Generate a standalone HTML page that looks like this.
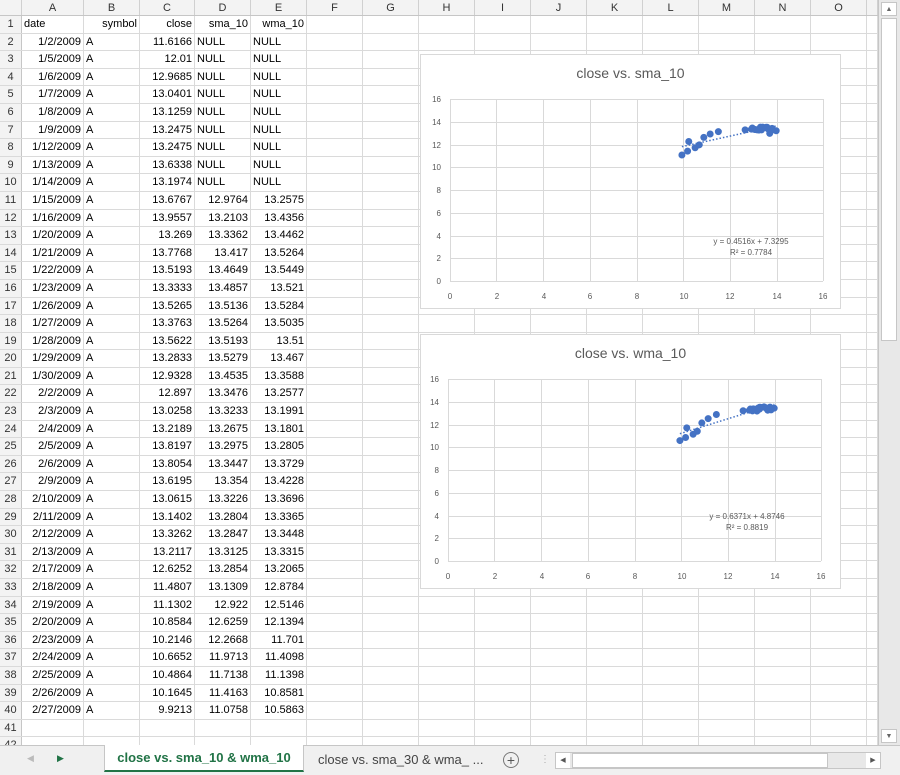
<!DOCTYPE html>
<html><head><meta charset="utf-8"><style>
*{box-sizing:border-box;margin:0;padding:0}
body{width:900px;height:775px;overflow:hidden;background:#fff;font-family:"Liberation Sans",sans-serif;font-size:11px;color:#000;position:relative}
.hdr{position:absolute;left:0;top:0;height:16px;width:878px;background:#f3f3f3;border-bottom:1px solid #c6c6c6;display:flex}
.hdr div{border-right:1px solid #d0d0d0;text-align:center;line-height:16px;color:#333;font-size:11px}
.rows{position:absolute;left:0;top:16px;width:878px}
.r{display:flex;height:17.6px;border-bottom:1px solid #dadada}
.r div{border-right:1px solid #dadada;line-height:17px;padding:0 2px;white-space:nowrap;overflow:hidden}
.r div:first-child{background:#f3f3f3;border-right:1px solid #c6c6c6;text-align:center;color:#333;padding:0}
.w0{width:22px}.wA{width:62px}.wB{width:56px}.wC{width:55px}.wD{width:56px}.wE{width:56px}.wn{width:56px}.wl{width:11px}
.rt{text-align:right}
.chart{position:absolute;background:#fff;border:1px solid #d9d9d9}
.ttl{position:absolute;width:100%;text-align:center;top:10px;font-size:14px;color:#595959}
.vs{position:absolute;left:878px;top:0;width:22px;height:745px;background:#e8e8e8;border-left:1px solid #c6c6c6}
.tabs{position:absolute;left:0;top:745px;width:900px;height:30px;background:#f0f0f0;border-top:1px solid #c6c6c6}
</style></head><body>
<div class="hdr"><div class="w0"></div><div class="wA">A</div><div class="wB">B</div><div class="wC">C</div><div class="wD">D</div><div class="wE">E</div><div class="wn">F</div><div class="wn">G</div><div class="wn">H</div><div class="wn">I</div><div class="wn">J</div><div class="wn">K</div><div class="wn">L</div><div class="wn">M</div><div class="wn">N</div><div class="wn">O</div><div class="wl"></div></div>
<div class="rows" id="rows">
<div class="r"><div class="w0">1</div><div class="wA">date</div><div class="wB rt">symbol</div><div class="wC rt">close</div><div class="wD rt">sma_10</div><div class="wE rt">wma_10</div><div class="wn"></div><div class="wn"></div><div class="wn"></div><div class="wn"></div><div class="wn"></div><div class="wn"></div><div class="wn"></div><div class="wn"></div><div class="wn"></div><div class="wn"></div><div class="wl"></div></div>
<div class="r"><div class="w0">2</div><div class="wA rt">1/2/2009</div><div class="wB">A</div><div class="wC rt">11.6166</div><div class="wD">NULL</div><div class="wE">NULL</div><div class="wn"></div><div class="wn"></div><div class="wn"></div><div class="wn"></div><div class="wn"></div><div class="wn"></div><div class="wn"></div><div class="wn"></div><div class="wn"></div><div class="wn"></div><div class="wl"></div></div>
<div class="r"><div class="w0">3</div><div class="wA rt">1/5/2009</div><div class="wB">A</div><div class="wC rt">12.01</div><div class="wD">NULL</div><div class="wE">NULL</div><div class="wn"></div><div class="wn"></div><div class="wn"></div><div class="wn"></div><div class="wn"></div><div class="wn"></div><div class="wn"></div><div class="wn"></div><div class="wn"></div><div class="wn"></div><div class="wl"></div></div>
<div class="r"><div class="w0">4</div><div class="wA rt">1/6/2009</div><div class="wB">A</div><div class="wC rt">12.9685</div><div class="wD">NULL</div><div class="wE">NULL</div><div class="wn"></div><div class="wn"></div><div class="wn"></div><div class="wn"></div><div class="wn"></div><div class="wn"></div><div class="wn"></div><div class="wn"></div><div class="wn"></div><div class="wn"></div><div class="wl"></div></div>
<div class="r"><div class="w0">5</div><div class="wA rt">1/7/2009</div><div class="wB">A</div><div class="wC rt">13.0401</div><div class="wD">NULL</div><div class="wE">NULL</div><div class="wn"></div><div class="wn"></div><div class="wn"></div><div class="wn"></div><div class="wn"></div><div class="wn"></div><div class="wn"></div><div class="wn"></div><div class="wn"></div><div class="wn"></div><div class="wl"></div></div>
<div class="r"><div class="w0">6</div><div class="wA rt">1/8/2009</div><div class="wB">A</div><div class="wC rt">13.1259</div><div class="wD">NULL</div><div class="wE">NULL</div><div class="wn"></div><div class="wn"></div><div class="wn"></div><div class="wn"></div><div class="wn"></div><div class="wn"></div><div class="wn"></div><div class="wn"></div><div class="wn"></div><div class="wn"></div><div class="wl"></div></div>
<div class="r"><div class="w0">7</div><div class="wA rt">1/9/2009</div><div class="wB">A</div><div class="wC rt">13.2475</div><div class="wD">NULL</div><div class="wE">NULL</div><div class="wn"></div><div class="wn"></div><div class="wn"></div><div class="wn"></div><div class="wn"></div><div class="wn"></div><div class="wn"></div><div class="wn"></div><div class="wn"></div><div class="wn"></div><div class="wl"></div></div>
<div class="r"><div class="w0">8</div><div class="wA rt">1/12/2009</div><div class="wB">A</div><div class="wC rt">13.2475</div><div class="wD">NULL</div><div class="wE">NULL</div><div class="wn"></div><div class="wn"></div><div class="wn"></div><div class="wn"></div><div class="wn"></div><div class="wn"></div><div class="wn"></div><div class="wn"></div><div class="wn"></div><div class="wn"></div><div class="wl"></div></div>
<div class="r"><div class="w0">9</div><div class="wA rt">1/13/2009</div><div class="wB">A</div><div class="wC rt">13.6338</div><div class="wD">NULL</div><div class="wE">NULL</div><div class="wn"></div><div class="wn"></div><div class="wn"></div><div class="wn"></div><div class="wn"></div><div class="wn"></div><div class="wn"></div><div class="wn"></div><div class="wn"></div><div class="wn"></div><div class="wl"></div></div>
<div class="r"><div class="w0">10</div><div class="wA rt">1/14/2009</div><div class="wB">A</div><div class="wC rt">13.1974</div><div class="wD">NULL</div><div class="wE">NULL</div><div class="wn"></div><div class="wn"></div><div class="wn"></div><div class="wn"></div><div class="wn"></div><div class="wn"></div><div class="wn"></div><div class="wn"></div><div class="wn"></div><div class="wn"></div><div class="wl"></div></div>
<div class="r"><div class="w0">11</div><div class="wA rt">1/15/2009</div><div class="wB">A</div><div class="wC rt">13.6767</div><div class="wD rt">12.9764</div><div class="wE rt">13.2575</div><div class="wn"></div><div class="wn"></div><div class="wn"></div><div class="wn"></div><div class="wn"></div><div class="wn"></div><div class="wn"></div><div class="wn"></div><div class="wn"></div><div class="wn"></div><div class="wl"></div></div>
<div class="r"><div class="w0">12</div><div class="wA rt">1/16/2009</div><div class="wB">A</div><div class="wC rt">13.9557</div><div class="wD rt">13.2103</div><div class="wE rt">13.4356</div><div class="wn"></div><div class="wn"></div><div class="wn"></div><div class="wn"></div><div class="wn"></div><div class="wn"></div><div class="wn"></div><div class="wn"></div><div class="wn"></div><div class="wn"></div><div class="wl"></div></div>
<div class="r"><div class="w0">13</div><div class="wA rt">1/20/2009</div><div class="wB">A</div><div class="wC rt">13.269</div><div class="wD rt">13.3362</div><div class="wE rt">13.4462</div><div class="wn"></div><div class="wn"></div><div class="wn"></div><div class="wn"></div><div class="wn"></div><div class="wn"></div><div class="wn"></div><div class="wn"></div><div class="wn"></div><div class="wn"></div><div class="wl"></div></div>
<div class="r"><div class="w0">14</div><div class="wA rt">1/21/2009</div><div class="wB">A</div><div class="wC rt">13.7768</div><div class="wD rt">13.417</div><div class="wE rt">13.5264</div><div class="wn"></div><div class="wn"></div><div class="wn"></div><div class="wn"></div><div class="wn"></div><div class="wn"></div><div class="wn"></div><div class="wn"></div><div class="wn"></div><div class="wn"></div><div class="wl"></div></div>
<div class="r"><div class="w0">15</div><div class="wA rt">1/22/2009</div><div class="wB">A</div><div class="wC rt">13.5193</div><div class="wD rt">13.4649</div><div class="wE rt">13.5449</div><div class="wn"></div><div class="wn"></div><div class="wn"></div><div class="wn"></div><div class="wn"></div><div class="wn"></div><div class="wn"></div><div class="wn"></div><div class="wn"></div><div class="wn"></div><div class="wl"></div></div>
<div class="r"><div class="w0">16</div><div class="wA rt">1/23/2009</div><div class="wB">A</div><div class="wC rt">13.3333</div><div class="wD rt">13.4857</div><div class="wE rt">13.521</div><div class="wn"></div><div class="wn"></div><div class="wn"></div><div class="wn"></div><div class="wn"></div><div class="wn"></div><div class="wn"></div><div class="wn"></div><div class="wn"></div><div class="wn"></div><div class="wl"></div></div>
<div class="r"><div class="w0">17</div><div class="wA rt">1/26/2009</div><div class="wB">A</div><div class="wC rt">13.5265</div><div class="wD rt">13.5136</div><div class="wE rt">13.5284</div><div class="wn"></div><div class="wn"></div><div class="wn"></div><div class="wn"></div><div class="wn"></div><div class="wn"></div><div class="wn"></div><div class="wn"></div><div class="wn"></div><div class="wn"></div><div class="wl"></div></div>
<div class="r"><div class="w0">18</div><div class="wA rt">1/27/2009</div><div class="wB">A</div><div class="wC rt">13.3763</div><div class="wD rt">13.5264</div><div class="wE rt">13.5035</div><div class="wn"></div><div class="wn"></div><div class="wn"></div><div class="wn"></div><div class="wn"></div><div class="wn"></div><div class="wn"></div><div class="wn"></div><div class="wn"></div><div class="wn"></div><div class="wl"></div></div>
<div class="r"><div class="w0">19</div><div class="wA rt">1/28/2009</div><div class="wB">A</div><div class="wC rt">13.5622</div><div class="wD rt">13.5193</div><div class="wE rt">13.51</div><div class="wn"></div><div class="wn"></div><div class="wn"></div><div class="wn"></div><div class="wn"></div><div class="wn"></div><div class="wn"></div><div class="wn"></div><div class="wn"></div><div class="wn"></div><div class="wl"></div></div>
<div class="r"><div class="w0">20</div><div class="wA rt">1/29/2009</div><div class="wB">A</div><div class="wC rt">13.2833</div><div class="wD rt">13.5279</div><div class="wE rt">13.467</div><div class="wn"></div><div class="wn"></div><div class="wn"></div><div class="wn"></div><div class="wn"></div><div class="wn"></div><div class="wn"></div><div class="wn"></div><div class="wn"></div><div class="wn"></div><div class="wl"></div></div>
<div class="r"><div class="w0">21</div><div class="wA rt">1/30/2009</div><div class="wB">A</div><div class="wC rt">12.9328</div><div class="wD rt">13.4535</div><div class="wE rt">13.3588</div><div class="wn"></div><div class="wn"></div><div class="wn"></div><div class="wn"></div><div class="wn"></div><div class="wn"></div><div class="wn"></div><div class="wn"></div><div class="wn"></div><div class="wn"></div><div class="wl"></div></div>
<div class="r"><div class="w0">22</div><div class="wA rt">2/2/2009</div><div class="wB">A</div><div class="wC rt">12.897</div><div class="wD rt">13.3476</div><div class="wE rt">13.2577</div><div class="wn"></div><div class="wn"></div><div class="wn"></div><div class="wn"></div><div class="wn"></div><div class="wn"></div><div class="wn"></div><div class="wn"></div><div class="wn"></div><div class="wn"></div><div class="wl"></div></div>
<div class="r"><div class="w0">23</div><div class="wA rt">2/3/2009</div><div class="wB">A</div><div class="wC rt">13.0258</div><div class="wD rt">13.3233</div><div class="wE rt">13.1991</div><div class="wn"></div><div class="wn"></div><div class="wn"></div><div class="wn"></div><div class="wn"></div><div class="wn"></div><div class="wn"></div><div class="wn"></div><div class="wn"></div><div class="wn"></div><div class="wl"></div></div>
<div class="r"><div class="w0">24</div><div class="wA rt">2/4/2009</div><div class="wB">A</div><div class="wC rt">13.2189</div><div class="wD rt">13.2675</div><div class="wE rt">13.1801</div><div class="wn"></div><div class="wn"></div><div class="wn"></div><div class="wn"></div><div class="wn"></div><div class="wn"></div><div class="wn"></div><div class="wn"></div><div class="wn"></div><div class="wn"></div><div class="wl"></div></div>
<div class="r"><div class="w0">25</div><div class="wA rt">2/5/2009</div><div class="wB">A</div><div class="wC rt">13.8197</div><div class="wD rt">13.2975</div><div class="wE rt">13.2805</div><div class="wn"></div><div class="wn"></div><div class="wn"></div><div class="wn"></div><div class="wn"></div><div class="wn"></div><div class="wn"></div><div class="wn"></div><div class="wn"></div><div class="wn"></div><div class="wl"></div></div>
<div class="r"><div class="w0">26</div><div class="wA rt">2/6/2009</div><div class="wB">A</div><div class="wC rt">13.8054</div><div class="wD rt">13.3447</div><div class="wE rt">13.3729</div><div class="wn"></div><div class="wn"></div><div class="wn"></div><div class="wn"></div><div class="wn"></div><div class="wn"></div><div class="wn"></div><div class="wn"></div><div class="wn"></div><div class="wn"></div><div class="wl"></div></div>
<div class="r"><div class="w0">27</div><div class="wA rt">2/9/2009</div><div class="wB">A</div><div class="wC rt">13.6195</div><div class="wD rt">13.354</div><div class="wE rt">13.4228</div><div class="wn"></div><div class="wn"></div><div class="wn"></div><div class="wn"></div><div class="wn"></div><div class="wn"></div><div class="wn"></div><div class="wn"></div><div class="wn"></div><div class="wn"></div><div class="wl"></div></div>
<div class="r"><div class="w0">28</div><div class="wA rt">2/10/2009</div><div class="wB">A</div><div class="wC rt">13.0615</div><div class="wD rt">13.3226</div><div class="wE rt">13.3696</div><div class="wn"></div><div class="wn"></div><div class="wn"></div><div class="wn"></div><div class="wn"></div><div class="wn"></div><div class="wn"></div><div class="wn"></div><div class="wn"></div><div class="wn"></div><div class="wl"></div></div>
<div class="r"><div class="w0">29</div><div class="wA rt">2/11/2009</div><div class="wB">A</div><div class="wC rt">13.1402</div><div class="wD rt">13.2804</div><div class="wE rt">13.3365</div><div class="wn"></div><div class="wn"></div><div class="wn"></div><div class="wn"></div><div class="wn"></div><div class="wn"></div><div class="wn"></div><div class="wn"></div><div class="wn"></div><div class="wn"></div><div class="wl"></div></div>
<div class="r"><div class="w0">30</div><div class="wA rt">2/12/2009</div><div class="wB">A</div><div class="wC rt">13.3262</div><div class="wD rt">13.2847</div><div class="wE rt">13.3448</div><div class="wn"></div><div class="wn"></div><div class="wn"></div><div class="wn"></div><div class="wn"></div><div class="wn"></div><div class="wn"></div><div class="wn"></div><div class="wn"></div><div class="wn"></div><div class="wl"></div></div>
<div class="r"><div class="w0">31</div><div class="wA rt">2/13/2009</div><div class="wB">A</div><div class="wC rt">13.2117</div><div class="wD rt">13.3125</div><div class="wE rt">13.3315</div><div class="wn"></div><div class="wn"></div><div class="wn"></div><div class="wn"></div><div class="wn"></div><div class="wn"></div><div class="wn"></div><div class="wn"></div><div class="wn"></div><div class="wn"></div><div class="wl"></div></div>
<div class="r"><div class="w0">32</div><div class="wA rt">2/17/2009</div><div class="wB">A</div><div class="wC rt">12.6252</div><div class="wD rt">13.2854</div><div class="wE rt">13.2065</div><div class="wn"></div><div class="wn"></div><div class="wn"></div><div class="wn"></div><div class="wn"></div><div class="wn"></div><div class="wn"></div><div class="wn"></div><div class="wn"></div><div class="wn"></div><div class="wl"></div></div>
<div class="r"><div class="w0">33</div><div class="wA rt">2/18/2009</div><div class="wB">A</div><div class="wC rt">11.4807</div><div class="wD rt">13.1309</div><div class="wE rt">12.8784</div><div class="wn"></div><div class="wn"></div><div class="wn"></div><div class="wn"></div><div class="wn"></div><div class="wn"></div><div class="wn"></div><div class="wn"></div><div class="wn"></div><div class="wn"></div><div class="wl"></div></div>
<div class="r"><div class="w0">34</div><div class="wA rt">2/19/2009</div><div class="wB">A</div><div class="wC rt">11.1302</div><div class="wD rt">12.922</div><div class="wE rt">12.5146</div><div class="wn"></div><div class="wn"></div><div class="wn"></div><div class="wn"></div><div class="wn"></div><div class="wn"></div><div class="wn"></div><div class="wn"></div><div class="wn"></div><div class="wn"></div><div class="wl"></div></div>
<div class="r"><div class="w0">35</div><div class="wA rt">2/20/2009</div><div class="wB">A</div><div class="wC rt">10.8584</div><div class="wD rt">12.6259</div><div class="wE rt">12.1394</div><div class="wn"></div><div class="wn"></div><div class="wn"></div><div class="wn"></div><div class="wn"></div><div class="wn"></div><div class="wn"></div><div class="wn"></div><div class="wn"></div><div class="wn"></div><div class="wl"></div></div>
<div class="r"><div class="w0">36</div><div class="wA rt">2/23/2009</div><div class="wB">A</div><div class="wC rt">10.2146</div><div class="wD rt">12.2668</div><div class="wE rt">11.701</div><div class="wn"></div><div class="wn"></div><div class="wn"></div><div class="wn"></div><div class="wn"></div><div class="wn"></div><div class="wn"></div><div class="wn"></div><div class="wn"></div><div class="wn"></div><div class="wl"></div></div>
<div class="r"><div class="w0">37</div><div class="wA rt">2/24/2009</div><div class="wB">A</div><div class="wC rt">10.6652</div><div class="wD rt">11.9713</div><div class="wE rt">11.4098</div><div class="wn"></div><div class="wn"></div><div class="wn"></div><div class="wn"></div><div class="wn"></div><div class="wn"></div><div class="wn"></div><div class="wn"></div><div class="wn"></div><div class="wn"></div><div class="wl"></div></div>
<div class="r"><div class="w0">38</div><div class="wA rt">2/25/2009</div><div class="wB">A</div><div class="wC rt">10.4864</div><div class="wD rt">11.7138</div><div class="wE rt">11.1398</div><div class="wn"></div><div class="wn"></div><div class="wn"></div><div class="wn"></div><div class="wn"></div><div class="wn"></div><div class="wn"></div><div class="wn"></div><div class="wn"></div><div class="wn"></div><div class="wl"></div></div>
<div class="r"><div class="w0">39</div><div class="wA rt">2/26/2009</div><div class="wB">A</div><div class="wC rt">10.1645</div><div class="wD rt">11.4163</div><div class="wE rt">10.8581</div><div class="wn"></div><div class="wn"></div><div class="wn"></div><div class="wn"></div><div class="wn"></div><div class="wn"></div><div class="wn"></div><div class="wn"></div><div class="wn"></div><div class="wn"></div><div class="wl"></div></div>
<div class="r"><div class="w0">40</div><div class="wA rt">2/27/2009</div><div class="wB">A</div><div class="wC rt">9.9213</div><div class="wD rt">11.0758</div><div class="wE rt">10.5863</div><div class="wn"></div><div class="wn"></div><div class="wn"></div><div class="wn"></div><div class="wn"></div><div class="wn"></div><div class="wn"></div><div class="wn"></div><div class="wn"></div><div class="wn"></div><div class="wl"></div></div>
<div class="r"><div class="w0">41</div><div class="wA"></div><div class="wB"></div><div class="wC"></div><div class="wD"></div><div class="wE"></div><div class="wn"></div><div class="wn"></div><div class="wn"></div><div class="wn"></div><div class="wn"></div><div class="wn"></div><div class="wn"></div><div class="wn"></div><div class="wn"></div><div class="wn"></div><div class="wl"></div></div>
<div class="r"><div class="w0">42</div><div class="wA"></div><div class="wB"></div><div class="wC"></div><div class="wD"></div><div class="wE"></div><div class="wn"></div><div class="wn"></div><div class="wn"></div><div class="wn"></div><div class="wn"></div><div class="wn"></div><div class="wn"></div><div class="wn"></div><div class="wn"></div><div class="wn"></div><div class="wl"></div></div>
</div>

<!-- Chart 1 -->
<div class="chart" style="left:420px;top:54px;width:421px;height:255px">
<div class="ttl">close vs. sma_10</div>
<svg width="421" height="255" style="position:absolute;left:0;top:0" font-family="Liberation Sans,sans-serif" font-size="8" fill="#595959">
<g stroke="#d9d9d9" stroke-width="1">
<path d="M29 44.5H402M29 67.5H402M29 90.5H402M29 112.5H402M29 135.5H402M29 158.5H402M29 181.5H402M29 203.5H402M29 226.5H402"/>
<path d="M29.5 44V226M75.5 44V226M122.5 44V226M169.5 44V226M216.5 44V226M262.5 44V226M309.5 44V226M356.5 44V226M402.5 44V226"/>
</g>
<g text-anchor="end"><text x="20" y="47">16</text><text x="20" y="70">14</text><text x="20" y="93">12</text><text x="20" y="115">10</text><text x="20" y="138">8</text><text x="20" y="161">6</text><text x="20" y="184">4</text><text x="20" y="206">2</text><text x="20" y="229">0</text></g>
<g text-anchor="middle"><text x="29" y="244">0</text><text x="76" y="244">2</text><text x="123" y="244">4</text><text x="169" y="244">6</text><text x="216" y="244">8</text><text x="263" y="244">10</text><text x="309" y="244">12</text><text x="356" y="244">14</text><text x="402" y="244">16</text></g>
<g transform="translate(29,226) scale(23.375,-11.375)">
<path d="M9.92 11.81L13.96 13.63" stroke="#4472c4" stroke-width="1.5" stroke-dasharray="1.5 2" vector-effect="non-scaling-stroke" fill="none"/>
<path fill="none" stroke="#4472c4" stroke-width="7" stroke-linecap="round" vector-effect="non-scaling-stroke" d="M13.6767 12.9764h0M13.9557 13.2103h0M13.269 13.3362h0M13.7768 13.417h0M13.5193 13.4649h0M13.3333 13.4857h0M13.5265 13.5136h0M13.3763 13.5264h0M13.5622 13.5193h0M13.2833 13.5279h0M12.9328 13.4535h0M12.897 13.3476h0M13.0258 13.3233h0M13.2189 13.2675h0M13.8197 13.2975h0M13.8054 13.3447h0M13.6195 13.354h0M13.0615 13.3226h0M13.1402 13.2804h0M13.3262 13.2847h0M13.2117 13.3125h0M12.6252 13.2854h0M11.4807 13.1309h0M11.1302 12.922h0M10.8584 12.6259h0M10.2146 12.2668h0M10.6652 11.9713h0M10.4864 11.7138h0M10.1645 11.4163h0M9.9213 11.0758h0"/>
</g>
<text x="330" y="189" text-anchor="middle">y = 0.4516x + 7.3295</text>
<text x="330" y="200" text-anchor="middle">R² = 0.7784</text>
</svg>
</div>

<!-- Chart 2 -->
<div class="chart" style="left:420px;top:334px;width:421px;height:255px">
<div class="ttl">close vs. wma_10</div>
<svg width="421" height="255" style="position:absolute;left:0;top:0" font-family="Liberation Sans,sans-serif" font-size="8" fill="#595959">
<g stroke="#d9d9d9" stroke-width="1">
<path d="M27 44.5H400M27 67.5H400M27 90.5H400M27 112.5H400M27 135.5H400M27 158.5H400M27 181.5H400M27 203.5H400M27 226.5H400"/>
<path d="M27.5 44V226M73.5 44V226M120.5 44V226M167.5 44V226M214.5 44V226M260.5 44V226M307.5 44V226M354.5 44V226M400.5 44V226"/>
</g>
<g text-anchor="end"><text x="18" y="47">16</text><text x="18" y="70">14</text><text x="18" y="93">12</text><text x="18" y="115">10</text><text x="18" y="138">8</text><text x="18" y="161">6</text><text x="18" y="184">4</text><text x="18" y="206">2</text><text x="18" y="229">0</text></g>
<g text-anchor="middle"><text x="27" y="244">0</text><text x="74" y="244">2</text><text x="121" y="244">4</text><text x="167" y="244">6</text><text x="214" y="244">8</text><text x="261" y="244">10</text><text x="307" y="244">12</text><text x="354" y="244">14</text><text x="400" y="244">16</text></g>
<g transform="translate(27,226) scale(23.375,-11.375)">
<path d="M9.92 11.19L13.96 13.77" stroke="#4472c4" stroke-width="1.5" stroke-dasharray="1.5 2" vector-effect="non-scaling-stroke" fill="none"/>
<path fill="none" stroke="#4472c4" stroke-width="7" stroke-linecap="round" vector-effect="non-scaling-stroke" d="M13.6767 13.2575h0M13.9557 13.4356h0M13.269 13.4462h0M13.7768 13.5264h0M13.5193 13.5449h0M13.3333 13.521h0M13.5265 13.5284h0M13.3763 13.5035h0M13.5622 13.51h0M13.2833 13.467h0M12.9328 13.3588h0M12.897 13.2577h0M13.0258 13.1991h0M13.2189 13.1801h0M13.8197 13.2805h0M13.8054 13.3729h0M13.6195 13.4228h0M13.0615 13.3696h0M13.1402 13.3365h0M13.3262 13.3448h0M13.2117 13.3315h0M12.6252 13.2065h0M11.4807 12.8784h0M11.1302 12.5146h0M10.8584 12.1394h0M10.2146 11.701h0M10.6652 11.4098h0M10.4864 11.1398h0M10.1645 10.8581h0M9.9213 10.5863h0"/>
</g>
<text x="326" y="184" text-anchor="middle">y = 0.6371x + 4.8746</text>
<text x="326" y="195" text-anchor="middle">R² = 0.8819</text>
</svg>
</div>

<!-- vertical scrollbar -->
<div class="vs">
<div style="position:absolute;left:2px;top:2px;width:16px;height:14px;background:#fff;border:1px solid #c6c6c6;font-size:7px;color:#666;text-align:center;line-height:13px">▲</div>
<div style="position:absolute;left:2px;top:18px;width:16px;height:323px;background:#fff;border:1px solid #c6c6c6"></div>
<div style="position:absolute;left:2px;top:729px;width:16px;height:14px;background:#fff;border:1px solid #c6c6c6;font-size:7px;color:#666;text-align:center;line-height:13px">▼</div>
</div>

<!-- tabs -->
<div class="tabs">
<div style="position:absolute;left:27px;top:7px;color:#bbb;font-size:9px">◀</div>
<div style="position:absolute;left:57px;top:7px;color:#217346;font-size:9px">▶</div>
<div style="position:absolute;left:104px;top:-1px;width:200px;height:27px;background:#fff;border-bottom:2px solid #217346;border-left:1px solid #c6c6c6;border-right:1px solid #c6c6c6;color:#217346;font-weight:bold;font-size:13px;text-align:center;line-height:26px">close vs. sma_10 &amp; wma_10</div>
<div style="position:absolute;left:318px;top:0;line-height:28px;font-size:13px;color:#444">close vs. sma_30 &amp; wma_ ...</div>
<div style="position:absolute;left:503px;top:6px;width:16px;height:16px;border:1px solid #777;border-radius:50%;text-align:center;line-height:14px;font-size:14px;color:#555">+</div>
<div style="position:absolute;left:540px;top:8px;color:#aaa;font-size:10px">⋮</div>
<div style="position:absolute;left:555px;top:6px;width:326px;height:17px;background:#e8e8e8;border:1px solid #c6c6c6"></div>
<div style="position:absolute;left:556px;top:7px;width:14px;height:15px;background:#fff;font-size:7px;color:#555;text-align:center;line-height:15px">◀</div>
<div style="position:absolute;left:572px;top:7px;width:256px;height:15px;background:#fff;border:1px solid #c6c6c6"></div>
<div style="position:absolute;left:866px;top:7px;width:14px;height:15px;background:#fff;font-size:7px;color:#555;text-align:center;line-height:15px">▶</div>
</div>
</body></html>
